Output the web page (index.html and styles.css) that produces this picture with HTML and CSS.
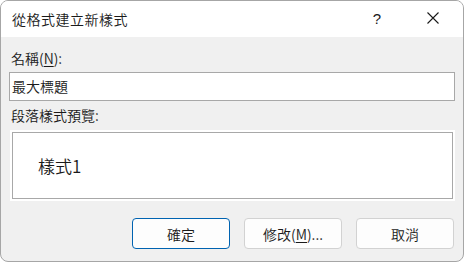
FILE: index.html
```html
<!DOCTYPE html>
<html lang="zh-Hant">
<head>
<meta charset="utf-8">
<link rel="stylesheet" href="styles.css">
</head>
<body>
<div class="window">
  <div class="titlebar">
    <div class="title">從格式建立新樣式</div>
    <div class="tb-btn help">?</div>
    <div class="tb-btn close">
      <svg width="12" height="12" viewBox="0 0 12 12"><path d="M0.5 0.5 L11.5 11.5 M11.5 0.5 L0.5 11.5" stroke="#1a1a1a" stroke-width="1.1" fill="none"/></svg>
    </div>
  </div>
  <div class="content">
    <div class="label">名稱(<u>N</u>):</div>
    <div class="input">最大標題</div>
    <div class="label label2">段落樣式預覽:</div>
    <div class="preview">
      <div class="preview-inner">樣式1</div>
    </div>
    <div class="buttons">
      <div class="btn default">確定</div>
      <div class="btn">修改(<u>M</u>)...</div>
      <div class="btn">取消</div>
    </div>
  </div>
</div>
</body>
</html>
```
FILE: styles.css
```css
* { box-sizing: border-box; }
html, body { margin: 0; padding: 0; background: #ffffff; }
body {
  font-family: "Noto Sans CJK TC", "Noto Sans", sans-serif;
  font-weight: 350;
  color: #1a1a1a;
}
.window {
  width: 464px;
  height: 262px;
  border: 1px solid #a6a6a6;
  border-radius: 8px;
  overflow: hidden;
  background: #f0f0f0;
  display: flex;
  flex-direction: column;
}
.titlebar {
  height: 36px;
  background: #ffffff;
  display: flex;
  align-items: center;
  flex-shrink: 0;
}
.title {
  flex: 1;
  padding-left: 11px;
  font-size: 14px;
  letter-spacing: 0.5px;
  line-height: 20px;
  margin-top: -1px;
}
.tb-btn {
  height: 36px;
  display: flex;
  align-items: center;
  justify-content: center;
}
.help {
  width: 52px;
  font-family: "Liberation Sans", sans-serif;
  font-weight: 400;
  font-size: 15px;
  margin-top: -1px;
}
.close { width: 60px; margin-top: -2px; }
.close svg { display: block; }
.content {
  padding: 0 8px;
  display: flex;
  flex-direction: column;
}
.label {
  font-size: 14px;
  line-height: 20px;
  margin-top: 11px;
  padding-left: 2px;
}
.label u { text-underline-offset: 2px; }
.input {
  margin-top: 4px;
  height: 29px;
  background: #ffffff;
  border: 1px solid #a8a8a8;
  font-size: 14px;
  line-height: 27px;
  padding-left: 2px;
}
.label2 { margin-top: 4px; }
.preview {
  margin-top: 5px;
  height: 71px;
  background: #ffffff;
  padding: 2px;
  margin-left: 1px;
}
.preview-inner {
  height: 100%;
  border: 1px solid #a8a8a8;
  display: flex;
  align-items: center;
  padding-left: 25px;
  font-size: 17px;
  padding-bottom: 1px;
}
.buttons {
  margin-top: 17px;
  display: flex;
  justify-content: flex-end;
  gap: 14px;
  padding-right: 1px;
}
.btn {
  width: 98px;
  height: 31px;
  border: 1px solid #d2d2d2;
  border-radius: 4px;
  background: #fdfdfd;
  font-size: 14px;
  display: flex;
  align-items: center;
  justify-content: center;
}
.btn u { text-underline-offset: 2px; }
.btn.default { border-color: #0063b1; }
```
